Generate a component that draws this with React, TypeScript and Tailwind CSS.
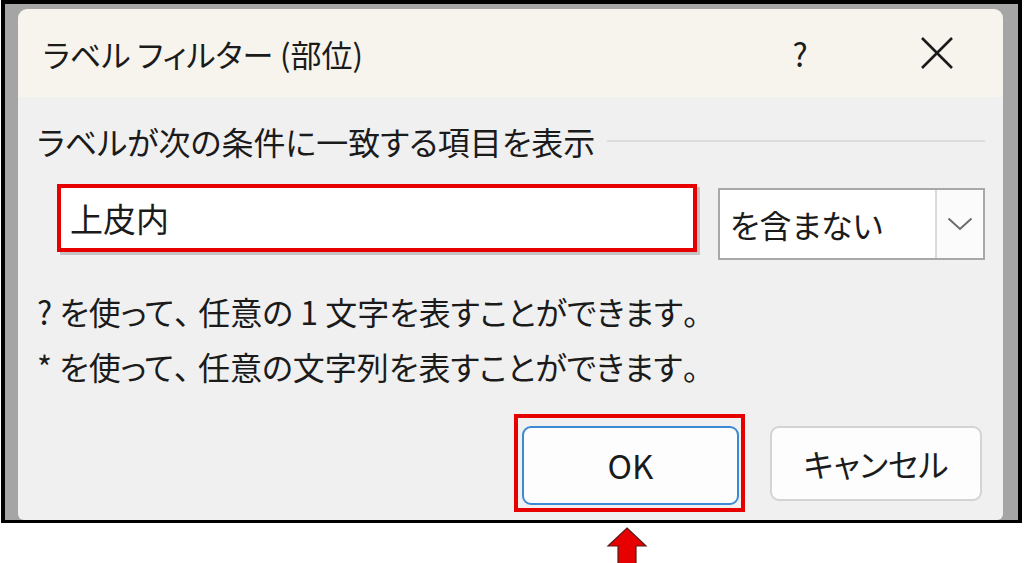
import React from "react";

const jp = { fontFamily: '"Noto Sans CJK JP", "Noto Sans", sans-serif' };
const palt = { fontFeatureSettings: '"palt"' };

export default function App() {
  return (
    <div className="w-[1024px] h-[563px] bg-white overflow-hidden text-[#1b1b1b]" style={jp}>
      {/* screenshot frame */}
      <div className="ml-[1px] w-[1021px] h-[523px] border-4 border-b-[3px] border-black bg-[#a5a5a5] pt-[5px] pl-[13px] pr-[15px]">
        <div className="h-full flex flex-col rounded-t-[9px] rounded-b-[6px] overflow-hidden">
          {/* Title bar */}
          <div className="h-[88px] shrink-0 bg-[#f6f4ed] flex items-center pl-[25px]">
            <div className="text-[31px] leading-none" style={palt}>ラベル フィルター (部位)</div>
            <div className="ml-auto w-[30px] text-center text-[32px] leading-none mr-[105px]">?</div>
            <svg width="34" height="34" viewBox="0 0 34 34" className="mr-[49px]">
              <path d="M2 2 L32 32 M32 2 L2 32" stroke="#1b1b1b" strokeWidth="2.6" />
            </svg>
          </div>

          {/* Body */}
          <div className="flex-1 bg-[#f0f0f0] px-[19px] pr-[18px]">
            <div className="mt-[24px] h-[40px] flex items-center">
              <span className="text-[32px] leading-none whitespace-nowrap" style={palt}>ラベルが次の条件に一致する項目を表示</span>
              <div className="flex-1 ml-[12px] h-[2px] bg-[#dcdcdc]" />
            </div>

            <div className="mt-[23px] flex items-start">
              <div className="ml-[20px] w-[640px] h-[68px] border-4 border-[#e60000] bg-white shadow-[3px_3px_0_#c4c4c4] flex items-center pl-[9px]">
                <span className="text-[33px] leading-none">上皮内</span>
              </div>
              <div className="ml-[21px] mt-[4px] w-[267px] h-[72px] border-2 border-[#a8a8a8] bg-white flex">
                <div className="flex-1 flex items-center pl-[10px]">
                  <span className="text-[32px] leading-none" style={palt}>を含まない</span>
                </div>
                <div className="w-[48px] border-l-2 border-[#dadada] bg-[#fbfbfb] flex items-center justify-center">
                  <svg width="26" height="14" viewBox="0 0 26 14">
                    <path d="M1.5 1.5 L13 12 L24.5 1.5" fill="none" stroke="#6a6a6a" strokeWidth="2" />
                  </svg>
                </div>
              </div>
            </div>

            <div className="mt-[23px] text-[32px] leading-none whitespace-nowrap" style={palt}>
              <div className="h-[55px] flex items-center">
                ? を使って<span className="mr-[8px]">、</span>任意の 1 文字を表すことができます<span>。</span>
              </div>
              <div className="h-[55px] flex items-center">
                * を使って<span className="mr-[8px]">、</span>任意の文字列を表すことができます<span>。</span>
              </div>
            </div>

            <div className="mt-[21px] flex items-center justify-end pr-[3px]">
              <div className="w-[231px] h-[98px] border-4 border-[#e60000] pt-[8px] pl-[4px] pr-[2px] pb-[3px]">
                <button className="w-full h-full rounded-[9px] border-2 border-[#3a8ad4] bg-[#fdfdfd] text-[33px] leading-none" style={jp}>
                  OK
                </button>
              </div>
              <button className="ml-[25px] w-[212px] h-[75px] rounded-[9px] border-2 border-[#d4d4d4] bg-[#fdfdfd] text-[32px] leading-none" style={{ ...jp, ...palt }}>
                キャンセル
              </button>
            </div>
          </div>
        </div>
      </div>

      {/* annotation arrow */}
      <div className="pl-[606px] pt-[4px]">
        <svg width="42" height="40" viewBox="0 0 42 40">
          <path d="M21 1 L40 19 L30 19 L30 40 L12 40 L12 19 L2 19 Z" fill="#e60000" stroke="#5a1a1a" strokeWidth="1.2" />
        </svg>
      </div>
    </div>
  );
}
